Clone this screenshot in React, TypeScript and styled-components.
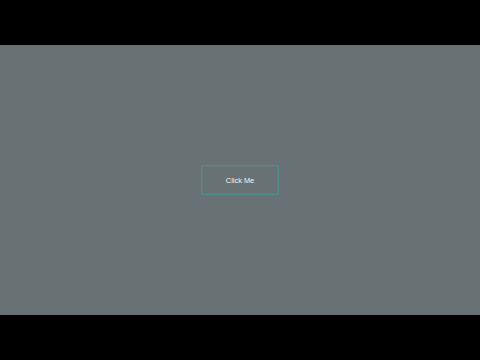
import styled, { createGlobalStyle } from "styled-components";

const GlobalStyle = createGlobalStyle`
  html, body {
    margin: 0;
    padding: 0;
    background: #000;
  }
`;

const Frame = styled.div`
  width: 480px;
  height: 360px;
  display: flex;
  flex-direction: column;
  background: #000;
`;

const Letterbox = styled.div`
  height: 45px;
  background: #000;
`;

const Stage = styled.div`
  height: 270px;
  background: #687275;
  display: flex;
  align-items: center;
  justify-content: center;
`;

const Button = styled.button`
  width: 78px;
  height: 30px;
  padding: 0;
  background: transparent;
  border: 1px solid #4f8f88;
  box-shadow: inset 0 0 0 1px rgba(90, 150, 140, 0.25);
  color: #f2f4f4;
  font-family: "Liberation Sans", Arial, sans-serif;
  font-size: 7.4px;
  cursor: pointer;
`;

export default function App() {
  return (
    <>
      <GlobalStyle />
      <Frame>
        <Letterbox />
        <Stage>
          <Button>Click Me</Button>
        </Stage>
        <Letterbox />
      </Frame>
    </>
  );
}
